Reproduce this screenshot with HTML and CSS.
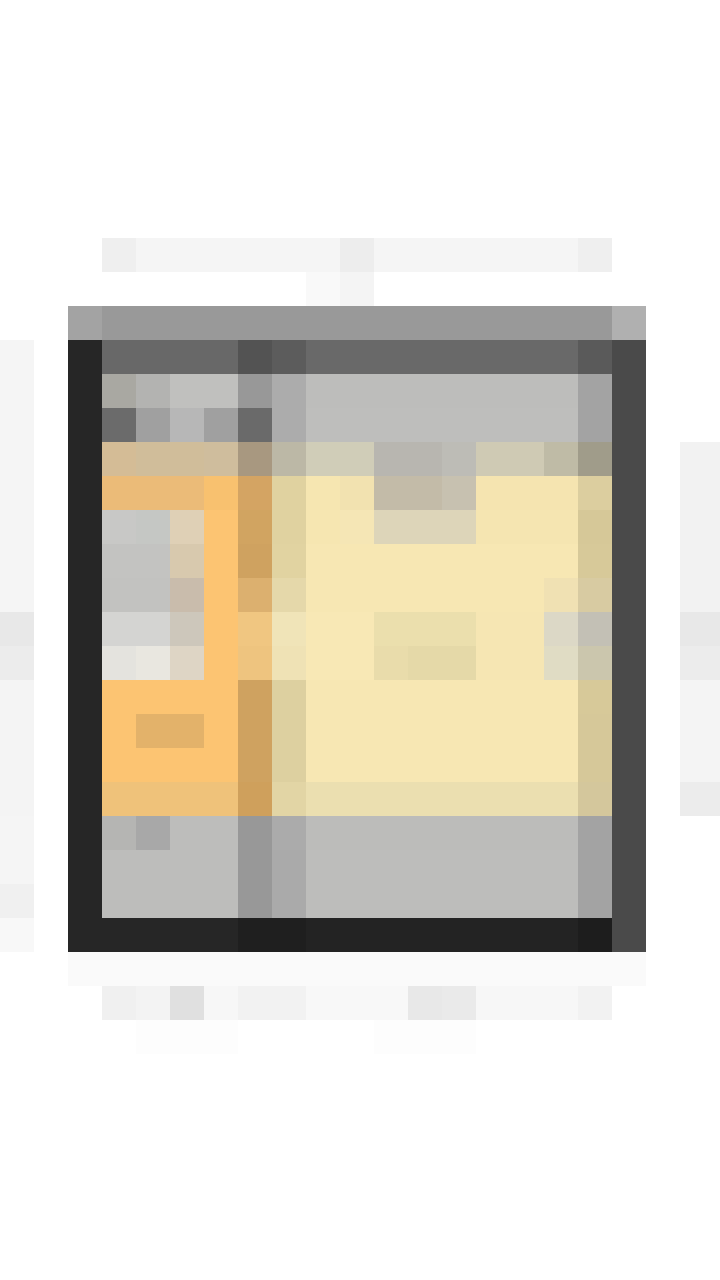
FILE: index.html
```html
<!DOCTYPE html>
<html lang="en">
<head>
<meta charset="utf-8">
<title>Mosaic</title>
<link rel="stylesheet" href="styles.css">
</head>
<body>
<main class="mosaic" id="mosaic" aria-label="Pixelated screenshot"></main>
<script src="script.js"></script>
</body>
</html>
```

FILE: styles.css
```css
html, body {
  margin: 0;
  padding: 0;
  background: #ffffff;
  font-family: "Liberation Sans", Arial, sans-serif;
}
.mosaic {
  display: grid;
  grid-template-columns: repeat(21, 34px) 6px;
  grid-auto-rows: 34px;
  width: 720px;
  height: 1280px;
  overflow: hidden;
}
.cell {
  background: #ffffff;
}
```

FILE: script.js
```js
(function () {
  var W = 'ffffff';
  function row(base, over) {
    var r = [];
    for (var i = 0; i < 22; i++) r.push(W);
    if (base) for (var k in base) r[k] = base[k];
    if (over) for (var j in over) r[j] = over[j];
    return r;
  }
  function fill(a, b, c) { var o = {}; for (var i = a; i <= b; i++) o[i] = c; return o; }
  function merge() { var o = {}; for (var i = 0; i < arguments.length; i++) for (var k in arguments[i]) o[k] = arguments[i][k]; return o; }
  var frame = { 0: 'f5f5f5', 2: '262626', 18: '4a4a4a' };
  var rows = [];
  for (var i = 0; i < 7; i++) rows.push(row());
  rows.push(row(fill(3, 17, 'f5f5f5'), {3: 'efefef', 10: 'ededed', 17: 'efefef'}));
  rows.push(row({9: 'f9f9f9', 10: 'f4f4f4'}));
  rows.push(row(merge(fill(3, 17, '999999')), {2: 'a3a3a3', 18: 'b0b0b0'}));
  rows.push(row(merge(frame, fill(3, 16, '696969')), {3: '686868', 4: '686868', 5: '686868', 6: '686868', 7: '535353', 8: '5c5c5c', 17: '5a5a5a'}));
  rows.push(row(merge(frame, fill(9, 16, 'bdbdbb')), {3: 'a9a8a2', 4: 'b3b3b1', 5: 'c0c0be', 6: 'c0c0be', 7: '989898', 8: 'acacac', 17: 'a3a3a3'}));
  rows.push(row(merge(frame, fill(9, 16, 'bebebc')), {3: '6b6b6b', 4: 'a0a0a0', 5: 'b7b7b7', 6: 'a0a0a0', 7: '6a6a6a', 8: 'acacac', 17: 'a3a3a3'}));
  rows.push(row(frame, {3: 'd4bc96', 4: 'd0bd9a', 5: 'd0bd9a', 6: 'cfbd9d', 7: 'a89880', 8: 'bcb8a6', 9: 'd0cdb8', 10: 'd0cdb8', 11: 'b8b6b0', 12: 'b8b6b0', 13: 'bdbcb6', 14: 'cfcab4', 15: 'cfcab4', 16: 'bfbba6', 17: 'a09c8a', 20: 'f2f2f2'}));
  var f2 = merge(frame, {20: 'f2f2f2'});
  rows.push(row(merge(f2, fill(14, 16, 'f5e4b0')), {3: 'ebbb78', 4: 'ebbb78', 5: 'ebbb78', 6: 'f8c16f', 7: 'd4a463', 8: 'e0d2a0', 9: 'f6e6b1', 10: 'f2e2b0', 11: 'c3bba8', 12: 'c3bba8', 13: 'c7c1b0', 17: 'dcce9f'}));
  rows.push(row(merge(f2, fill(14, 16, 'f5e5b1')), {3: 'c8c8c6', 4: 'c5c7c4', 5: 'dfd0b6', 6: 'fcc472', 7: 'd1a461', 8: 'e0d2a0', 9: 'f6e6b1', 10: 'f5e6b5', 11: 'ddd5b9', 12: 'ddd5b9', 13: 'ddd5b9', 17: 'd6c898'}));
  rows.push(row(merge(f2, fill(9, 16, 'f7e7b3')), {3: 'c3c3c1', 4: 'c3c3c1', 5: 'd8c9ae', 6: 'fcc472', 7: 'cfa260', 8: 'e1d3a1', 17: 'd7c999'}));
  rows.push(row(merge(f2, fill(9, 15, 'f7e7b3')), {3: 'c2c2c0', 4: 'c2c2c0', 5: 'c9bcac', 6: 'fcc472', 7: 'dcb06f', 8: 'e5d8aa', 16: 'f0e1b3', 17: 'd8cba2'}));
  rows.push(row(merge(frame, {0: 'e8e8e8', 20: 'e8e8e8'}), {3: 'd4d4d2', 4: 'd4d4d2', 5: 'cdc7bb', 6: 'fcc472', 7: 'f0c681', 8: 'f0e4b8', 9: 'f8e8b5', 10: 'f8e8b5', 11: 'ebdfad', 12: 'ebdfad', 13: 'ebdfad', 14: 'f6e6b3', 15: 'f6e6b3', 16: 'dcd8c6', 17: 'c3c0b5'}));
  rows.push(row(merge(frame, {0: 'ececec', 20: 'ececec'}), {3: 'e4e3de', 4: 'e9e7e0', 5: 'ded5c5', 6: 'fcc472', 7: 'eec47f', 8: 'efe2b5', 9: 'f8e8b5', 10: 'f8e8b5', 11: 'e9dcab', 12: 'e5d9a8', 13: 'e5d9a8', 14: 'f6e6b3', 15: 'f6e6b3', 16: 'e0dcc4', 17: 'cbc6ad'}));
  var f4 = merge(frame, {0: 'f4f4f4', 20: 'f4f4f4'});
  rows.push(row(merge(f4, fill(3, 6, 'fcc472'), fill(9, 16, 'f7e7b3')), {7: 'cfa260', 8: 'ddd0a0', 17: 'd7c999'}));
  rows.push(row(merge(f4, fill(9, 16, 'f7e7b3')), {3: 'fcc472', 4: 'e3b26a', 5: 'e3b26a', 6: 'fcc472', 7: 'cfa260', 8: 'ddd0a0', 17: 'd6c899'}));
  rows.push(row(merge(f4, fill(3, 6, 'fcc472'), fill(9, 16, 'f7e7b3')), {7: 'cfa260', 8: 'ddd0a0', 17: 'd6c899'}));
  rows.push(row(merge(frame, {0: 'f4f4f4', 20: 'ececec'}, fill(3, 6, 'efc27a'), fill(9, 16, 'ebdfb0')), {7: 'cfa05c', 8: 'e2d5a5', 17: 'd4c79c'}));
  rows.push(row(merge(frame, fill(9, 16, 'bcbcba')), {3: 'b5b5b3', 4: 'a8a8a8', 5: 'bdbdbb', 6: 'bdbdbb', 7: '989898', 8: 'ababab', 17: 'a3a3a3'}));
  rows.push(row(merge(frame, fill(3, 6, 'bdbdbb'), fill(9, 16, 'bdbdbb')), {7: '989898', 8: 'aaaaaa', 17: 'a3a3a3'}));
  rows.push(row(merge(frame, {0: 'f0f0f0'}, fill(3, 6, 'bdbdbb'), fill(9, 16, 'bdbdbb')), {7: '989898', 8: 'aaaaaa', 17: 'a3a3a3'}));
  rows.push(row(merge({0: 'f8f8f8', 18: '4a4a4a'}, fill(2, 6, '262626'), fill(9, 16, '232323')), {7: '1f1f1f', 8: '1f1f1f', 17: '1d1d1d'}));
  rows.push(row(fill(2, 18, 'fafafa')));
  rows.push(row(merge(fill(9, 11, 'f8f8f8'), fill(14, 16, 'f7f7f7')), {3: 'f0f0f0', 4: 'f3f3f3', 5: 'e0e0e0', 6: 'f7f7f7', 7: 'f2f2f2', 8: 'f2f2f2', 12: 'e8e8e8', 13: 'eaeaea', 17: 'f2f2f2'}));
  rows.push(row(merge(fill(4, 6, 'fdfdfd'), fill(11, 13, 'fdfdfd'))));
  while (rows.length < 38) rows.push(row());

  var host = document.getElementById('mosaic');
  var frag = document.createDocumentFragment();
  rows.forEach(function (r) {
    r.forEach(function (c, idx) {
      var d = document.createElement('div');
      d.className = 'cell';
      if (idx === 21) c = r[20];
      if (c !== W) d.style.background = '#' + c;
      frag.appendChild(d);
    });
  });
  host.appendChild(frag);
})();
```
